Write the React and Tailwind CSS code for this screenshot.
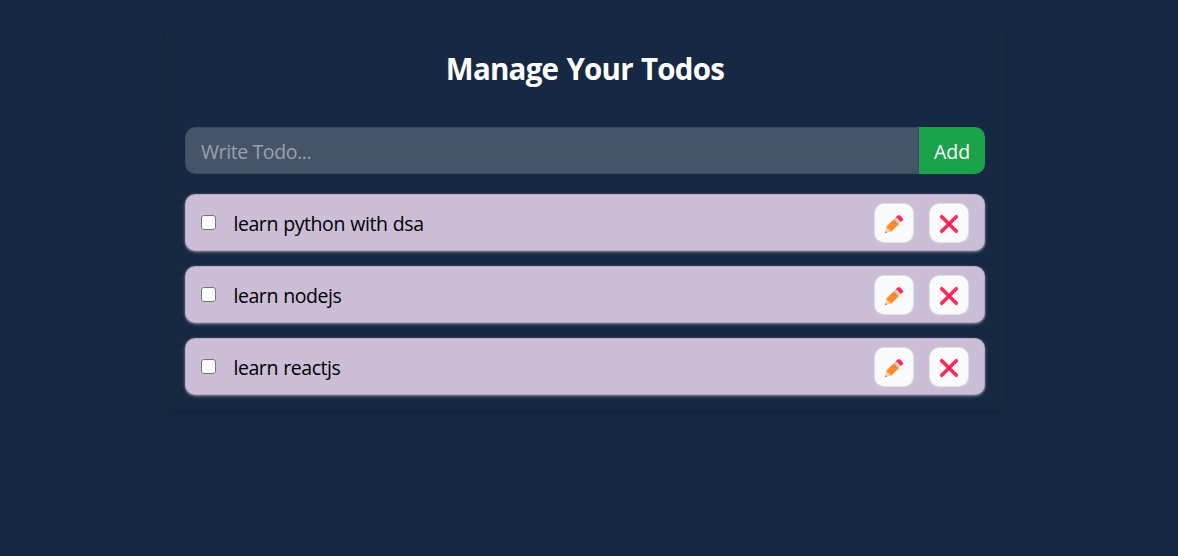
import React, { useState } from "react";

const initialTodos = [
  { id: 1, text: "learn python with dsa" },
  { id: 2, text: "learn nodejs" },
  { id: 3, text: "learn reactjs" },
];

function PencilIcon() {
  return (
    <svg viewBox="0 0 20 20" className="h-5 w-5" aria-hidden="true">
      <path d="M1 18.9 2.2 12.8 7.2 17.8Z" fill="#ffd089" />
      <path d="M1 18.9 1.3 17.3 2.6 18.6Z" fill="#4a5565" />
      <path d="M2.2 12.8 10 5 15 10 7.2 17.8Z" fill="#ff8a2a" />
      <path d="M10 5 11.9 3.1 16.9 8.1 15 10Z" fill="#cbd0d8" />
      <path d="M11.9 3.1 13.6 1.4Q14.8.4 16 1.4L18.6 4Q19.6 5.2 18.6 6.4L16.9 8.1Z" fill="#fb2c5c" />
    </svg>
  );
}

function CrossIcon() {
  return (
    <svg viewBox="0 0 20 20" className="h-5 w-5" aria-hidden="true">
      <path d="M2.7 2.7 17.3 17.3M17.3 2.7 2.7 17.3" stroke="#fb2c5c" strokeWidth="3.7" strokeLinecap="round" />
    </svg>
  );
}

function IconButton({ label, onClick, children }) {
  return (
    <button
      type="button"
      aria-label={label}
      onClick={onClick}
      className="flex h-10 w-10 shrink-0 items-center justify-center rounded-[10px] border border-black/10 bg-gray-50 pt-0.5"
    >
      {children}
    </button>
  );
}

function TodoItem({ todo, onToggle, onRemove }) {
  return (
    <li className="flex h-[57px] items-center rounded-[10px] border border-black/10 bg-[#ccbed7] px-[15px] text-black shadow-[0_1px_3px_rgba(255,255,255,0.5)]">
      <input
        type="checkbox"
        checked={Boolean(todo.done)}
        onChange={onToggle}
        className="h-[15px] w-[15px] shrink-0 appearance-none rounded-[3px] border border-[#767676] bg-white checked:bg-blue-600"
      />
      <span className="ml-[17.5px] flex-1 pt-0.5 text-[19.5px] leading-[30px] tracking-[-0.45px] [word-spacing:0.8px]">
        {todo.text}
      </span>
      <div className="flex gap-[15px]">
        <IconButton label="Edit">
          <PencilIcon />
        </IconButton>
        <IconButton label="Delete" onClick={onRemove}>
          <CrossIcon />
        </IconButton>
      </div>
    </li>
  );
}

export default function App() {
  const [todos, setTodos] = useState(initialTodos);
  const [text, setText] = useState("");

  const add = (e) => {
    e.preventDefault();
    if (!text.trim()) return;
    setTodos([{ id: Date.now(), text }, ...todos]);
    setText("");
  };

  return (
    <div className="min-h-screen bg-[#172842] pt-[22px] font-['Open_Sans','Noto_Sans',sans-serif]">
      <main className="ml-[165px] w-[840px] rounded-[10px] px-5 pt-[27px] pb-[15px] text-white shadow-[0_5px_7.5px_-1px_rgba(0,0,0,0.07),0_2.5px_5px_-2.5px_rgba(0,0,0,0.07)]">
        <h1 className="mb-[38px] text-center text-[29.5px] leading-10 font-bold tracking-[-0.75px] [word-spacing:1.2px]">
          Manage Your Todos
        </h1>
        <form onSubmit={add} className="mb-5 flex h-[47px]">
          <input
            value={text}
            onChange={(e) => setText(e.target.value)}
            placeholder="Write Todo..."
            className="min-w-0 flex-1 rounded-l-[10px] border border-black/10 bg-[#455468] px-[15px] pt-0.5 text-[19.5px] tracking-[-0.4px] outline-none placeholder:text-[#99a1af]"
          />
          <button type="submit" className="w-[66px] rounded-r-[10px] bg-[#1aa34a] pt-0.5 text-[19.5px]">
            Add
          </button>
        </form>
        <ul className="flex flex-col gap-[15px]">
          {todos.map((todo) => (
            <TodoItem
              key={todo.id}
              todo={todo}
              onToggle={() => setTodos(todos.map((t) => (t.id === todo.id ? { ...t, done: !t.done } : t)))}
              onRemove={() => setTodos(todos.filter((t) => t.id !== todo.id))}
            />
          ))}
        </ul>
      </main>
    </div>
  );
}
